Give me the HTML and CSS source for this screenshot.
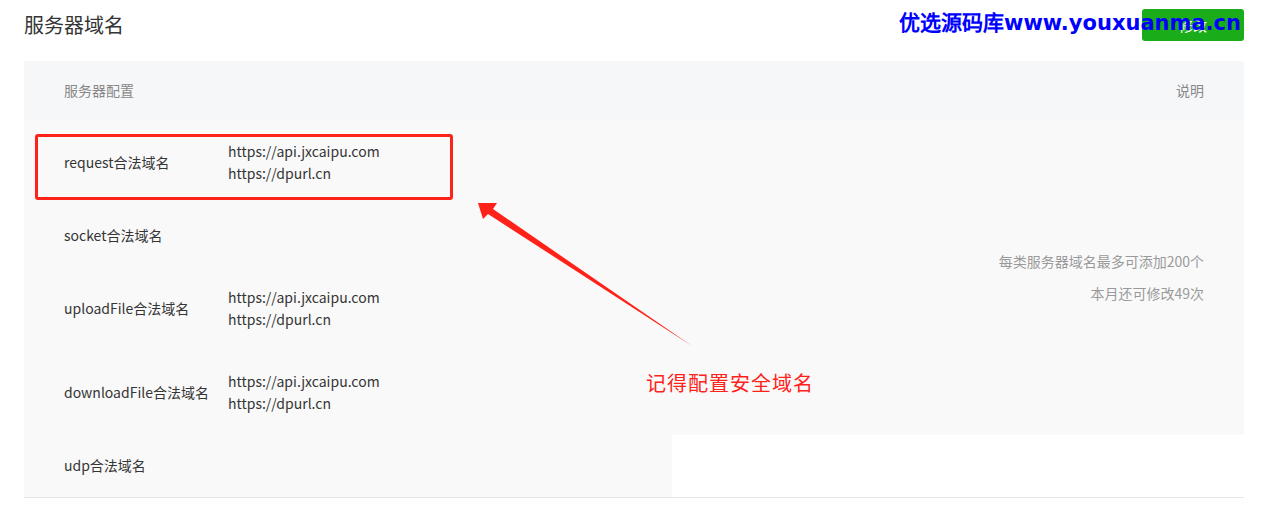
FILE: index.html
```html
<!DOCTYPE html>
<html lang="zh-CN">
<head>
<meta charset="utf-8">
<title>服务器域名</title>
<link rel="stylesheet" href="styles.css">
</head>
<body>
<div class="page">
  <header class="topbar">
    <h1 class="title">服务器域名</h1>
    <button class="btn-primary" type="button">修改</button>
  </header>

  <section class="domain-table">
    <div class="thead">
      <span>服务器配置</span>
      <span>说明</span>
    </div>

    <div class="notes">
      <p>每类服务器域名最多可添加200个</p>
      <p>本月还可修改49次</p>
    </div>

    <div class="cell-label">request合法域名</div>
    <div class="cell-value">
      <div>https://api.jxcaipu.com</div>
      <div>https://dpurl.cn</div>
    </div>

    <div class="cell-label">socket合法域名</div>
    <div class="cell-value"></div>

    <div class="cell-label">uploadFile合法域名</div>
    <div class="cell-value">
      <div>https://api.jxcaipu.com</div>
      <div>https://dpurl.cn</div>
    </div>

    <div class="cell-label">downloadFile合法域名</div>
    <div class="cell-value">
      <div>https://api.jxcaipu.com</div>
      <div>https://dpurl.cn</div>
    </div>

    <div class="cell-label">udp合法域名</div>
    <div class="cell-value"></div>
  </section>

  <!-- annotation layer drawn on top of the table -->
  <div class="mark-box"></div>
  <svg class="mark-arrow" width="1262" height="516" viewBox="0 0 1262 516" aria-hidden="true">
    <polygon points="478,203 497,203 493,209 692,346 488,214 483,219" fill="#ff2219"/>
  </svg>
  <div class="mark-text">记得配置安全域名</div>

  <div class="watermark">优选源码库www.youxuanma.cn</div>
</div>
</body>
</html>
```

FILE: styles.css
```css
html, body {
  margin: 0;
  padding: 0;
  background: #ffffff;
}

body {
  font-family: "Noto Sans CJK SC", "Noto Sans", sans-serif;
  color: #353535;
  font-size: 14px;
}

.page {
  position: relative;
  width: 1262px;
  height: 516px;
  padding: 0 18px 0 24px;
  box-sizing: border-box;
  overflow: hidden;
}

/* top bar: page title + primary action */
.topbar {
  height: 50px;
  display: flex;
  align-items: center;
  justify-content: space-between;
}

.title {
  margin: 0;
  font-size: 20px;
  font-weight: normal;
  color: #353535;
  line-height: 28px;
  padding-bottom: 1px;
}

.btn-primary {
  width: 102px;
  height: 32px;
  border: 0;
  border-radius: 3px;
  background: #1aad19;
  color: #ffffff;
  font-family: inherit;
  font-size: 14px;
}

/* domain table */
.domain-table {
  margin-top: 11px;
  display: grid;
  grid-template-columns: 204px 444px 1fr;
  border-bottom: 1px solid #e6e6e6;
}

.thead {
  grid-column: 1 / -1;
  grid-row: 1;
  height: 60px;
  padding: 0 40px 2px;
  box-sizing: border-box;
  display: flex;
  align-items: center;
  justify-content: space-between;
  background: #f6f7f9;
  font-size: 14px;
  color: #888888;
}

.cell-label {
  grid-column: 1;
  padding: 19px 0 21px 40px;
  display: flex;
  align-items: center;
  line-height: 22px;
  background: #f9f9f9;
  white-space: nowrap;
}

.cell-value {
  grid-column: 2;
  padding: 19px 0 21px;
  line-height: 22px;
  background: #f9f9f9;
}

.notes {
  grid-column: 3;
  grid-row: 2 / span 4;
  padding: 0 40px 2px 0;
  display: flex;
  flex-direction: column;
  justify-content: center;
  align-items: flex-end;
  gap: 10px;
  background: #f9f9f9;
  font-size: 14px;
  color: #999999;
}

.notes p {
  margin: 0;
  line-height: 22px;
}

/* red annotation */
.mark-box {
  position: absolute;
  left: 35px;
  top: 134px;
  width: 418px;
  height: 66px;
  box-sizing: border-box;
  border: 3px solid #ff2219;
  border-radius: 3px;
}

.mark-arrow {
  position: absolute;
  left: 0;
  top: 0;
}

.mark-text {
  position: absolute;
  left: 646px;
  top: 369px;
  font-size: 20px;
  line-height: 28px;
  letter-spacing: 1px;
  color: #ff2219;
}

/* site watermark */
.watermark {
  position: absolute;
  left: 899px;
  top: 9px;
  font-family: "DejaVu Sans", sans-serif;
  font-weight: bold;
  font-size: 21px;
  line-height: 28px;
  color: #0000ff;
  white-space: nowrap;
}
```
